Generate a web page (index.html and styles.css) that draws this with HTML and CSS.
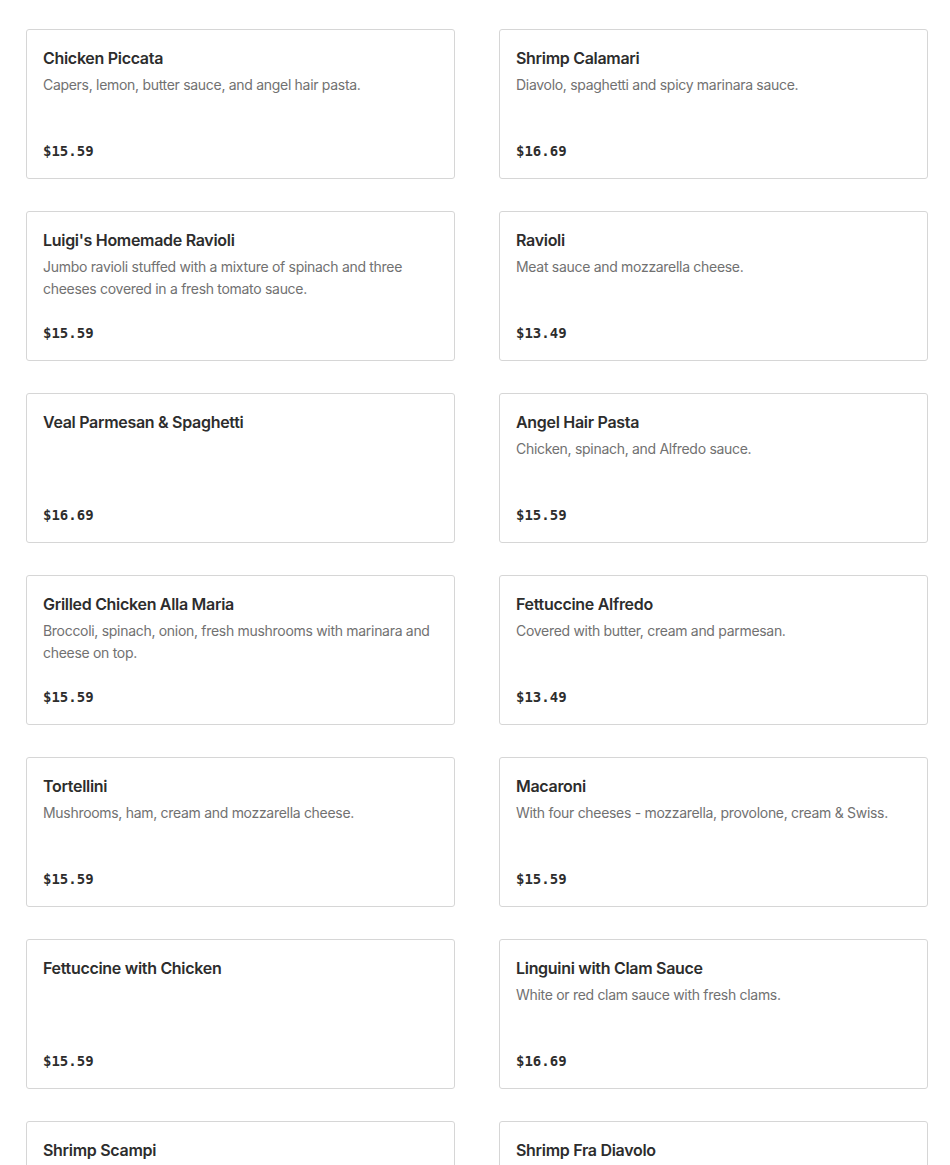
FILE: index.html
```html
<!DOCTYPE html>
<html lang="en">
<head>
    <meta charset="UTF-8">
    <meta name="viewport" content="width=device-width, initial-scale=1.0">
    <title>Pasta Menu</title>
    <link rel="stylesheet" href="styles.css">
</head>
<body>
    <section class="menu">
        <div class="menu-grid">
            <div class="item-card">
                <h3 class="item-name">Chicken Piccata</h3>
                <p class="item-desc">Capers, lemon, butter sauce, and angel hair pasta.</p>
                <div class="item-price">$15.59</div>
            </div>
            <div class="item-card">
                <h3 class="item-name">Shrimp Calamari</h3>
                <p class="item-desc">Diavolo, spaghetti and spicy marinara sauce.</p>
                <div class="item-price">$16.69</div>
            </div>
            <div class="item-card">
                <h3 class="item-name">Luigi's Homemade Ravioli</h3>
                <p class="item-desc">Jumbo ravioli stuffed with a mixture of spinach and three cheeses covered in a fresh tomato sauce.</p>
                <div class="item-price">$15.59</div>
            </div>
            <div class="item-card">
                <h3 class="item-name">Ravioli</h3>
                <p class="item-desc">Meat sauce and mozzarella cheese.</p>
                <div class="item-price">$13.49</div>
            </div>
            <div class="item-card">
                <h3 class="item-name">Veal Parmesan &amp; Spaghetti</h3>
                <p class="item-desc"></p>
                <div class="item-price">$16.69</div>
            </div>
            <div class="item-card">
                <h3 class="item-name">Angel Hair Pasta</h3>
                <p class="item-desc">Chicken, spinach, and Alfredo sauce.</p>
                <div class="item-price">$15.59</div>
            </div>
            <div class="item-card">
                <h3 class="item-name">Grilled Chicken Alla Maria</h3>
                <p class="item-desc">Broccoli, spinach, onion, fresh mushrooms with marinara and cheese on top.</p>
                <div class="item-price">$15.59</div>
            </div>
            <div class="item-card">
                <h3 class="item-name">Fettuccine Alfredo</h3>
                <p class="item-desc">Covered with butter, cream and parmesan.</p>
                <div class="item-price">$13.49</div>
            </div>
            <div class="item-card">
                <h3 class="item-name">Tortellini</h3>
                <p class="item-desc">Mushrooms, ham, cream and mozzarella cheese.</p>
                <div class="item-price">$15.59</div>
            </div>
            <div class="item-card">
                <h3 class="item-name">Macaroni</h3>
                <p class="item-desc">With four cheeses - mozzarella, provolone, cream &amp; Swiss.</p>
                <div class="item-price">$15.59</div>
            </div>
            <div class="item-card">
                <h3 class="item-name">Fettuccine with Chicken</h3>
                <p class="item-desc"></p>
                <div class="item-price">$15.59</div>
            </div>
            <div class="item-card">
                <h3 class="item-name">Linguini with Clam Sauce</h3>
                <p class="item-desc">White or red clam sauce with fresh clams.</p>
                <div class="item-price">$16.69</div>
            </div>
            <div class="item-card">
                <h3 class="item-name">Shrimp Scampi</h3>
                <p class="item-desc">Garlic, butter and white wine sauce over linguini.</p>
                <div class="item-price">$16.69</div>
            </div>
            <div class="item-card">
                <h3 class="item-name">Shrimp Fra Diavolo</h3>
                <p class="item-desc">Spicy marinara sauce over linguini.</p>
                <div class="item-price">$16.69</div>
            </div>
        </div>
    </section>
</body>
</html>
```

FILE: styles.css
```css
* {
    margin: 0;
    padding: 0;
    box-sizing: border-box;
}

body {
    font-family: 'Inter', 'Liberation Sans', sans-serif;
    background: #fff;
    color: #2d2d2d;
}

.menu {
    padding: 29px 22px 0 26px;
}

/* Menu grid */
.menu-grid {
    display: grid;
    grid-template-columns: 429px 429px;
    column-gap: 44px;
    row-gap: 32px;
}

.item-card {
    border: 1px solid #d6d6d6;
    border-radius: 3px;
    padding: 16px;
    height: 150px;
    display: flex;
    flex-direction: column;
}

.item-name {
    font-size: 16px;
    font-weight: 600;
    line-height: 24px;
    letter-spacing: -0.3px;
    color: #2d2d2d;
}

.item-desc {
    margin-top: 4px;
    font-size: 14px;
    line-height: 22px;
    letter-spacing: -0.3px;
    color: #717171;
    min-height: 44px;
}

.item-price {
    margin-top: auto;
    font-family: 'DejaVu Sans Mono', monospace;
    font-size: 14px;
    font-weight: 700;
    line-height: 22px;
    color: #2d2d2d;
}
```
